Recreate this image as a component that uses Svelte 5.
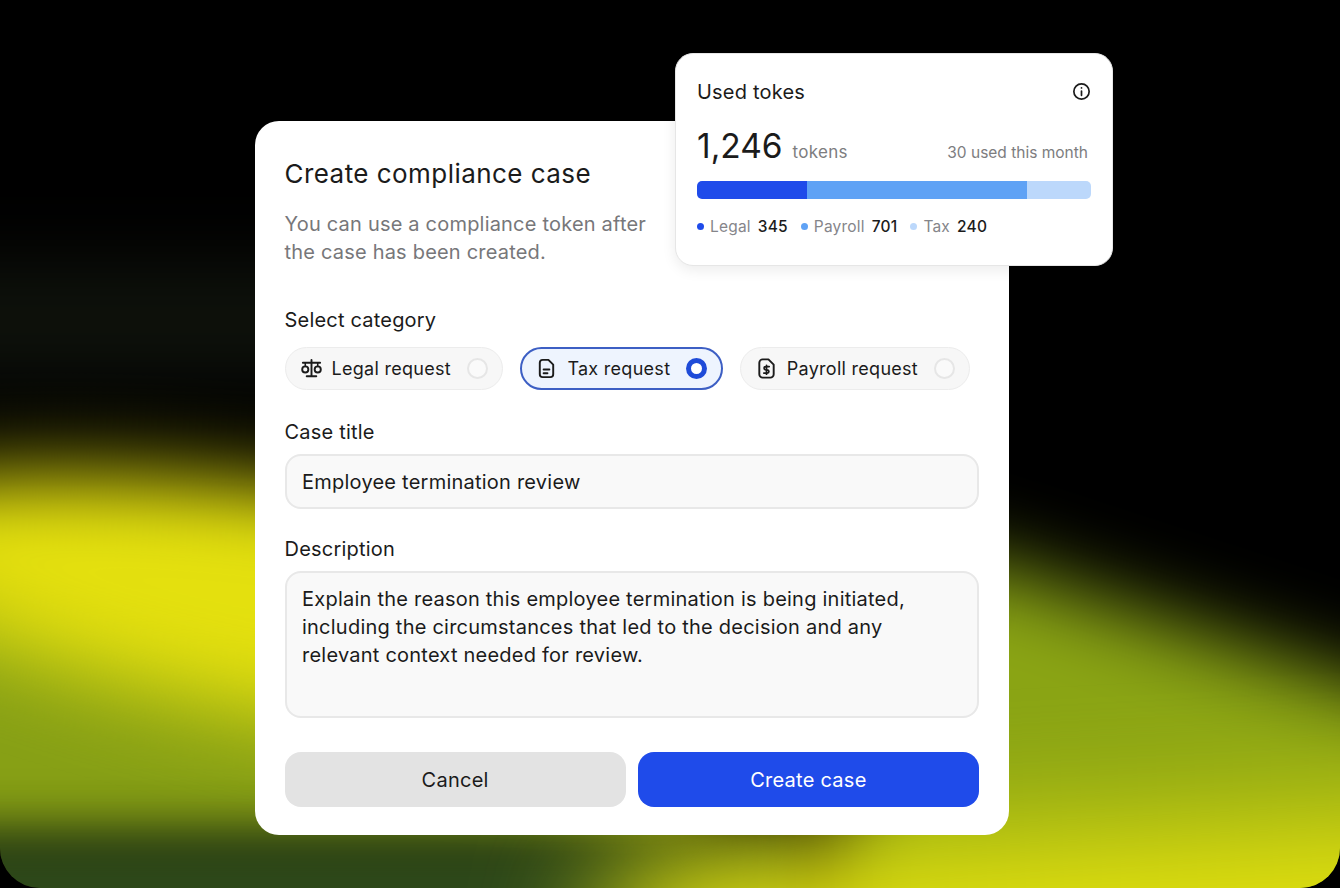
<script>
  const categories = [
    { label: 'Legal request', icon: 'scale', selected: false },
    { label: 'Tax request', icon: 'file', selected: true },
    { label: 'Payroll request', icon: 'dollar', selected: false }
  ];

  const usage = [
    { label: 'Legal', value: 345, color: '#1f4bea', width: 28 },
    { label: 'Payroll', value: 701, color: '#5fa2f5', width: 55.7 },
    { label: 'Tax', value: 240, color: '#bcd8fb', width: 16.3 }
  ];
</script>

<main class="frame">
  <div class="glow">
    <span class="blob haze"></span>
    <span class="blob olive"></span>
    <span class="blob moss"></span>
    <span class="blob lime"></span>
    <span class="blob right-green"></span>
    <span class="blob right-yellow"></span>
  </div>

  <section class="modal">
    <h1>Create compliance case</h1>
    <p class="lead">You can use a compliance token after<br />the case has been created.</p>

    <div class="label first">Select category</div>
    <div class="pills">
      {#each categories as cat}
        <div class="pill" class:selected={cat.selected}>
          <svg class="pill-icon" viewBox="0 0 24 24" fill="none" stroke="currentColor" stroke-width="2" stroke-linecap="round" stroke-linejoin="round">
            {#if cat.icon === 'scale'}
              <path d="M12 3v17M7 20h10M3 6h18" />
              <circle cx="5.500" cy="13" r="3.200" />
              <circle cx="18.500" cy="13" r="3.200" />
              <path d="M5.500 6v4M18.500 6v4" stroke-width="1.600" />
            {:else if cat.icon === 'file'}
              <path d="M14 3H8a3 3 0 0 0-3 3v12a3 3 0 0 0 3 3h8a3 3 0 0 0 3-3V8l-5-5Z" />
              <path d="M9 13h6M9 17h4" />
            {:else}
              <path d="M14 2.500H8a3.500 3.500 0 0 0-3.500 3.500v12A3.500 3.500 0 0 0 8 21.500h8a3.500 3.500 0 0 0 3.500-3.500V8L14 2.500Z" />
              <path d="M14.800 10h-3.600a1.700 1.700 0 0 0 0 3.400h1.600a1.700 1.700 0 0 1 0 3.400H9.200M12 8.700v9.300" stroke-width="1.800" />
            {/if}
          </svg>
          <span class="pill-text">{cat.label}</span>
          <span class="radio"></span>
        </div>
      {/each}
    </div>

    <div class="label">Case title</div>
    <div class="field">Employee termination review</div>

    <div class="label second">Description</div>
    <div class="field area">
      Explain the reason this employee termination is being initiated,<br />
      including the circumstances that led to the decision and any<br />
      relevant context needed for review.
    </div>

    <div class="actions">
      <button class="btn cancel">Cancel</button>
      <button class="btn create">Create case</button>
    </div>
  </section>

  <aside class="tokens">
    <div class="tokens-head">
      <span>Used tokes</span>
      <svg viewBox="2 2 20 20" fill="none" stroke="currentColor" stroke-width="2" stroke-linecap="round">
        <circle cx="12" cy="12" r="9" />
        <path d="M12 11.500v5M12 7.700v.1" />
      </svg>
    </div>
    <div class="count">
      <strong>1,246</strong>
      <span class="unit">tokens</span>
      <span class="month">30 used this month</span>
    </div>
    <div class="bar">
      {#each usage as u}
        <span style="width: {u.width}%; background: {u.color}"></span>
      {/each}
    </div>
    <div class="legend">
      {#each usage as u}
        <div class="legend-item">
          <span class="dot" style="background: {u.color}"></span>
          <span class="legend-name">{u.label}</span>
          <b>{u.value}</b>
        </div>
      {/each}
    </div>
  </aside>
</main>

<style>
  :global(body) {
    margin: 0;
    background: #000;
  }

  .frame {
    position: relative;
    width: 1340px;
    height: 888px;
    padding: 121px 0 0 255px;
    box-sizing: border-box;
    overflow: hidden;
    background: #000;
    border-radius: 0 0 40px 40px;
    font-family: Inter, "Liberation Sans", sans-serif;
    color: #1b1b1b;
  }

  .glow {
    position: absolute;
    inset: 0;
  }

  .blob {
    position: absolute;
    display: block;
    filter: blur(35px);
  }

  .haze {
    left: -100px;
    top: 270px;
    width: 500px;
    height: 100px;
    background: #10140d;
    filter: blur(40px);
  }

  .moss {
    left: -100px;
    top: 840px;
    width: 900px;
    height: 180px;
    background: #2e4a1a;
    filter: blur(25px);
  }

  .olive {
    left: -100px;
    top: 560px;
    width: 800px;
    height: 290px;
    background: #87a015;
  }

  .lime {
    left: -170px;
    top: 498px;
    width: 1040px;
    height: 230px;
    border-radius: 50%;
    background: #e4e00e;
    transform: rotate(9deg);
    filter: blur(42px);
  }

  .right-green {
    left: 860px;
    top: 655px;
    width: 760px;
    height: 400px;
    background: #8aa414;
    transform: rotate(18deg);
    filter: blur(40px);
  }

  .right-yellow {
    left: 600px;
    top: 825px;
    width: 1140px;
    height: 190px;
    border-radius: 90px;
    background: #e2e00e;
    transform: rotate(-3deg);
    filter: blur(60px);
  }

  .modal {
    position: relative;
    width: 754px;
    height: 714px;
    padding: 34px 30px 28px 29.500px;
    box-sizing: border-box;
    background: #fff;
    border-radius: 24px;
  }

  h1 {
    margin: 0;
    font-size: 26px;
    line-height: 38px;
    font-weight: 400;
    letter-spacing: 0.45px;
  }

  .lead {
    margin: 17px 0 0;
    font-size: 20px;
    line-height: 28px;
    color: #77777a;
    letter-spacing: 0.2px;
  }

  .label {
    margin-top: 23px;
    margin-bottom: 9px;
    font-size: 20px;
    line-height: 26px;
    font-weight: 400;
    letter-spacing: 0.2px;
  }

  .label.first {
    margin-top: 41px;
    margin-bottom: 14px;
  }

  .label.second {
    margin-top: 27px;
  }

  .pills {
    display: flex;
    gap: 17px;
    margin-bottom: 29px;
  }

  .pill {
    display: flex;
    align-items: center;
    height: 43px;
    box-sizing: border-box;
    padding: 0 14px;
    border: 1.500px solid #ececec;
    border-radius: 22px;
    background: #f7f7f7;
    font-size: 18px;
    font-weight: 400;
  }

  .pill.selected {
    padding: 0 13.500px;
    border-color: #3d5fc4;
    border-width: 2px;
    background: #eef4fe;
  }

  .pill-icon {
    width: 23px;
    height: 23px;
    margin-right: 9px;
  }

  .pill-text {
    margin-right: 16px;
    letter-spacing: 0.28px;
  }

  .radio {
    width: 21px;
    height: 21px;
    box-sizing: border-box;
    border: 2px solid #e6e6e6;
    border-radius: 50%;
    background: #fafafa;
  }

  .pill.selected .radio {
    border: 5px solid #1f4bd8;
    background: #fff;
  }

  .field {
    height: 55px;
    box-sizing: border-box;
    padding: 0 15.500px;
    display: flex;
    align-items: center;
    border: 2px solid #e8e8e8;
    border-radius: 16px;
    background: #f9f9f9;
    font-size: 20px;
    letter-spacing: 0.23px;
  }

  .field.area {
    display: block;
    height: 147px;
    padding: 12px 15.500px;
    line-height: 28px;
  }

  .actions {
    display: flex;
    gap: 12px;
    margin-top: 34px;
  }

  .btn {
    flex: 1;
    height: 55px;
    border: none;
    border-radius: 16px;
    font-family: inherit;
    font-size: 20px;
    font-weight: 400;
    letter-spacing: 0.25px;
  }

  .cancel {
    background: #e3e3e3;
    color: #1b1b1b;
  }

  .create {
    background: #1f4bea;
    color: #fff;
  }

  .tokens {
    position: absolute;
    left: 675px;
    top: 53px;
    width: 438px;
    height: 213px;
    box-sizing: border-box;
    padding: 25px 21px 0;
    background: #fff;
    border: 1px solid #e6e6e6;
    border-radius: 18px;
    box-shadow: 0 4px 14px rgba(0, 0, 0, 0.08);
  }

  .tokens-head {
    display: flex;
    justify-content: space-between;
    align-items: center;
    height: 26px;
    font-size: 20px;
    font-weight: 400;
    letter-spacing: 0.2px;
  }

  .tokens-head svg {
    width: 17px;
    height: 17px;
    margin-top: -2px;
    margin-right: 1px;
  }

  .count {
    display: flex;
    align-items: baseline;
    margin-top: 21px;
    height: 47px;
  }

  .count strong {
    font-size: 33.500px;
    font-weight: 400;
  }

  .unit {
    margin-left: 10px;
    font-size: 17px;
    color: #7d7d80;
    letter-spacing: 0.3px;
  }

  .month {
    margin-left: auto;
    margin-right: 3px;
    font-size: 15.500px;
    color: #7d7d80;
  }

  .bar {
    display: flex;
    height: 18px;
    margin-top: 8px;
    width: 394px;
    border-radius: 5px;
    overflow: hidden;
  }

  .bar span {
    display: block;
  }

  .legend {
    display: flex;
    gap: 13px;
    margin-top: 18px;
    font-size: 15.500px;
  }

  .legend-item {
    display: flex;
    align-items: center;
  }

  .dot {
    width: 7px;
    height: 7px;
    margin-right: 6px;
    border-radius: 50%;
  }

  .legend-name {
    color: #85858a;
    margin-right: 7px;
    letter-spacing: 0.2px;
  }

  .legend-item b {
    font-weight: 500;
    letter-spacing: 0.2px;
  }
</style>
